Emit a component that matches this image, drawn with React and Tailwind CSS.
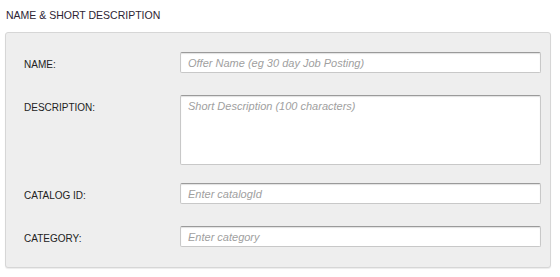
export default function App() {
  const rows = [
    { label: 'NAME:', placeholder: 'Offer Name (eg 30 day Job Posting)' },
    { label: 'DESCRIPTION:', placeholder: 'Short Description (100 characters)', area: true },
    { label: 'CATALOG ID:', placeholder: 'Enter catalogId' },
    { label: 'CATEGORY:', placeholder: 'Enter category' },
  ];

  return (
    <div className="w-[560px] h-[277px] bg-white font-['Liberation_Sans',Arial,sans-serif] text-[#333]">
      <div className="pl-[6px] pt-[9px] text-[10.5px] leading-[12px] text-[#2d2433]">
        NAME &amp; SHORT DESCRIPTION
      </div>
      <div className="ml-[5px] mt-[11px] w-[546px] rounded-[3px] border border-[#d6d6d6] bg-[#eeeeee] pl-[18px] pr-[9px] pt-[19px] pb-[20px] shadow-[0_1px_1px_rgba(0,0,0,0.08)]">
        <div className="flex flex-col">
          {rows.map((row, i) => (
            <div key={row.label} className={`flex items-start ${i === 0 ? '' : i === 1 ? 'mt-[22px]' : i === 2 ? 'mt-[18px]' : 'mt-[22px]'}`}>
              <div className="w-[156px] pt-[7px] text-[10px] leading-[12px] text-[#222]">
                {row.label}
              </div>
              {row.area ? (
                <textarea
                  placeholder={row.placeholder}
                  className="h-[70px] w-[361px] resize-none rounded-[2px] border border-[#c8c8c8] border-t-[#9a9a9a] bg-white px-[7px] pt-[4px] text-[11px] italic leading-[13px] placeholder:text-[#a0a0a0] shadow-[inset_0_1px_1px_rgba(0,0,0,0.12)] outline-none"
                />
              ) : (
                <input
                  placeholder={row.placeholder}
                  className="h-[21px] w-[361px] rounded-[2px] border border-[#c8c8c8] border-t-[#9a9a9a] bg-white px-[7px] text-[11px] italic placeholder:text-[#a0a0a0] shadow-[inset_0_1px_1px_rgba(0,0,0,0.12)] outline-none"
                />
              )}
            </div>
          ))}
        </div>
      </div>
    </div>
  );
}
